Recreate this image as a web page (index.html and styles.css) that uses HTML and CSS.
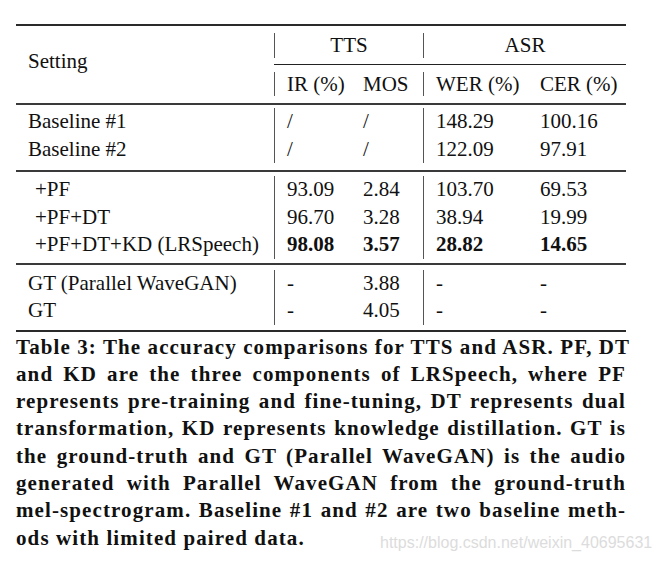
FILE: index.html
```html
<!DOCTYPE html>
<html>
<head>
<meta charset="utf-8">
<link rel="stylesheet" href="styles.css">
</head>
<body>
<div class="page">
  <div class="table">
    <div class="head">
      <div class="h-setting">Setting</div>
      <div class="h-group h-tts"><span class="vin">TTS</span></div>
      <div class="h-group h-asr"><span class="vin">ASR</span></div>
      <div class="h-sub vl"><span class="vin">IR (%)</span></div>
      <div class="h-sub"><span>MOS</span></div>
      <div class="h-sub vl wer"><span class="vin">WER (%)</span></div>
      <div class="h-sub"><span>CER (%)</span></div>
    </div>

    <div class="group g1">
      <div class="c c1">Baseline #1</div><div class="c c2">/</div><div class="c c3">/</div><div class="c c4">148.29</div><div class="c c5">100.16</div>
      <div class="c c1">Baseline #2</div><div class="c c2">/</div><div class="c c3">/</div><div class="c c4">122.09</div><div class="c c5">97.91</div>
    </div>

    <div class="group g2">
      <div class="c c1 ind">+PF</div><div class="c c2">93.09</div><div class="c c3">2.84</div><div class="c c4">103.70</div><div class="c c5">69.53</div>
      <div class="c c1 ind">+PF+DT</div><div class="c c2">96.70</div><div class="c c3">3.28</div><div class="c c4">38.94</div><div class="c c5">19.99</div>
      <div class="c c1 ind">+PF+DT+KD (LRSpeech)</div><div class="c c2 b">98.08</div><div class="c c3 b">3.57</div><div class="c c4 b">28.82</div><div class="c c5 b">14.65</div>
    </div>

    <div class="group g3">
      <div class="c c1">GT (Parallel WaveGAN)</div><div class="c c2">-</div><div class="c c3">3.88</div><div class="c c4">-</div><div class="c c5">-</div>
      <div class="c c1">GT</div><div class="c c2">-</div><div class="c c3">4.05</div><div class="c c4">-</div><div class="c c5">-</div>
    </div>
  </div>

  <div class="caption">
    <div class="ln">Table 3: The accuracy comparisons for TTS and ASR. PF, DT</div>
    <div class="ln">and KD are the three components of LRSpeech, where PF</div>
    <div class="ln">represents pre-training and fine-tuning, DT represents dual</div>
    <div class="ln">transformation, KD represents knowledge distillation. GT is</div>
    <div class="ln">the ground-truth and GT (Parallel WaveGAN) is the audio</div>
    <div class="ln">generated with Parallel WaveGAN from the ground-truth</div>
    <div class="ln">mel-spectrogram. Baseline #1 and #2 are two baseline meth-</div>
    <div class="ln last">ods with limited paired data.</div>
  </div>

  <div class="watermark">https://blog.csdn.net/weixin_40695631</div>
</div>
</body>
</html>
```

FILE: styles.css
```css
html, body {
  margin: 0;
  padding: 0;
  background: #ffffff;
}

.page {
  position: relative;
  width: 659px;
  height: 562px;
  padding: 24px 33px 0 16px;
  box-sizing: border-box;
  font-family: "Liberation Serif", "DejaVu Serif", serif;
  color: #111111;
}

.table {
  width: 610px;
  border-top: 2px solid #2a2a2a;
  border-bottom: 2px solid #2a2a2a;
  font-size: 21px;
}

.head,
.group {
  display: grid;
  grid-template-columns: 258px 77px 72px 105px 98px;
}

.head {
  border-bottom: 2px solid #3a3a3a;
}

.h-setting {
  grid-row: 1 / span 2;
  grid-column: 1;
  align-self: center;
  padding: 0 0 8px 12px;
  line-height: 24px;
}

.h-group {
  padding: 7px 0 6px;
  border-bottom: 1px solid #222222;
}

.h-tts { grid-column: 2 / span 2; }
.h-asr { grid-column: 4 / span 2; }

.h-group .vin {
  display: block;
  text-align: center;
  line-height: 25px;
  border-left: 1px solid #555555;
}

.h-sub {
  padding: 7px 0 7px;
  line-height: 24px;
}

.h-sub > span {
  display: block;
  padding-left: 12px;
}

.h-sub.vl > .vin {
  border-left: 1px solid #555555;
}

.group {
  line-height: 27.5px;
}

.g1 {
  padding: 3px 0 7px;
  border-bottom: 2px solid #3a3a3a;
}

.g2 {
  padding: 4px 0 4px;
  border-bottom: 2px solid #3a3a3a;
}

.g3 {
  padding: 5px 0 5px;
}

.c {
  padding-left: 12px;
  white-space: nowrap;
}

.c1.ind {
  padding-left: 19px;
}

.c2,
.c4 {
  border-left: 1px solid #555555;
}

.b {
  font-weight: bold;
}

.caption {
  width: 610px;
  margin-top: 2px;
  font-size: 21px;
  font-weight: bold;
  line-height: 27.3px;
  letter-spacing: 1.1px;
  color: #111111;
}

.ln {
  white-space: nowrap;
  text-align: justify;
  text-align-last: justify;
}

.ln.last {
  text-align-last: left;
}

.watermark {
  position: absolute;
  left: 380px;
  top: 533px;
  font-family: "Liberation Sans", Arial, sans-serif;
  font-size: 16px;
  line-height: 20px;
  color: #dcdcdc;
  white-space: nowrap;
}
```
